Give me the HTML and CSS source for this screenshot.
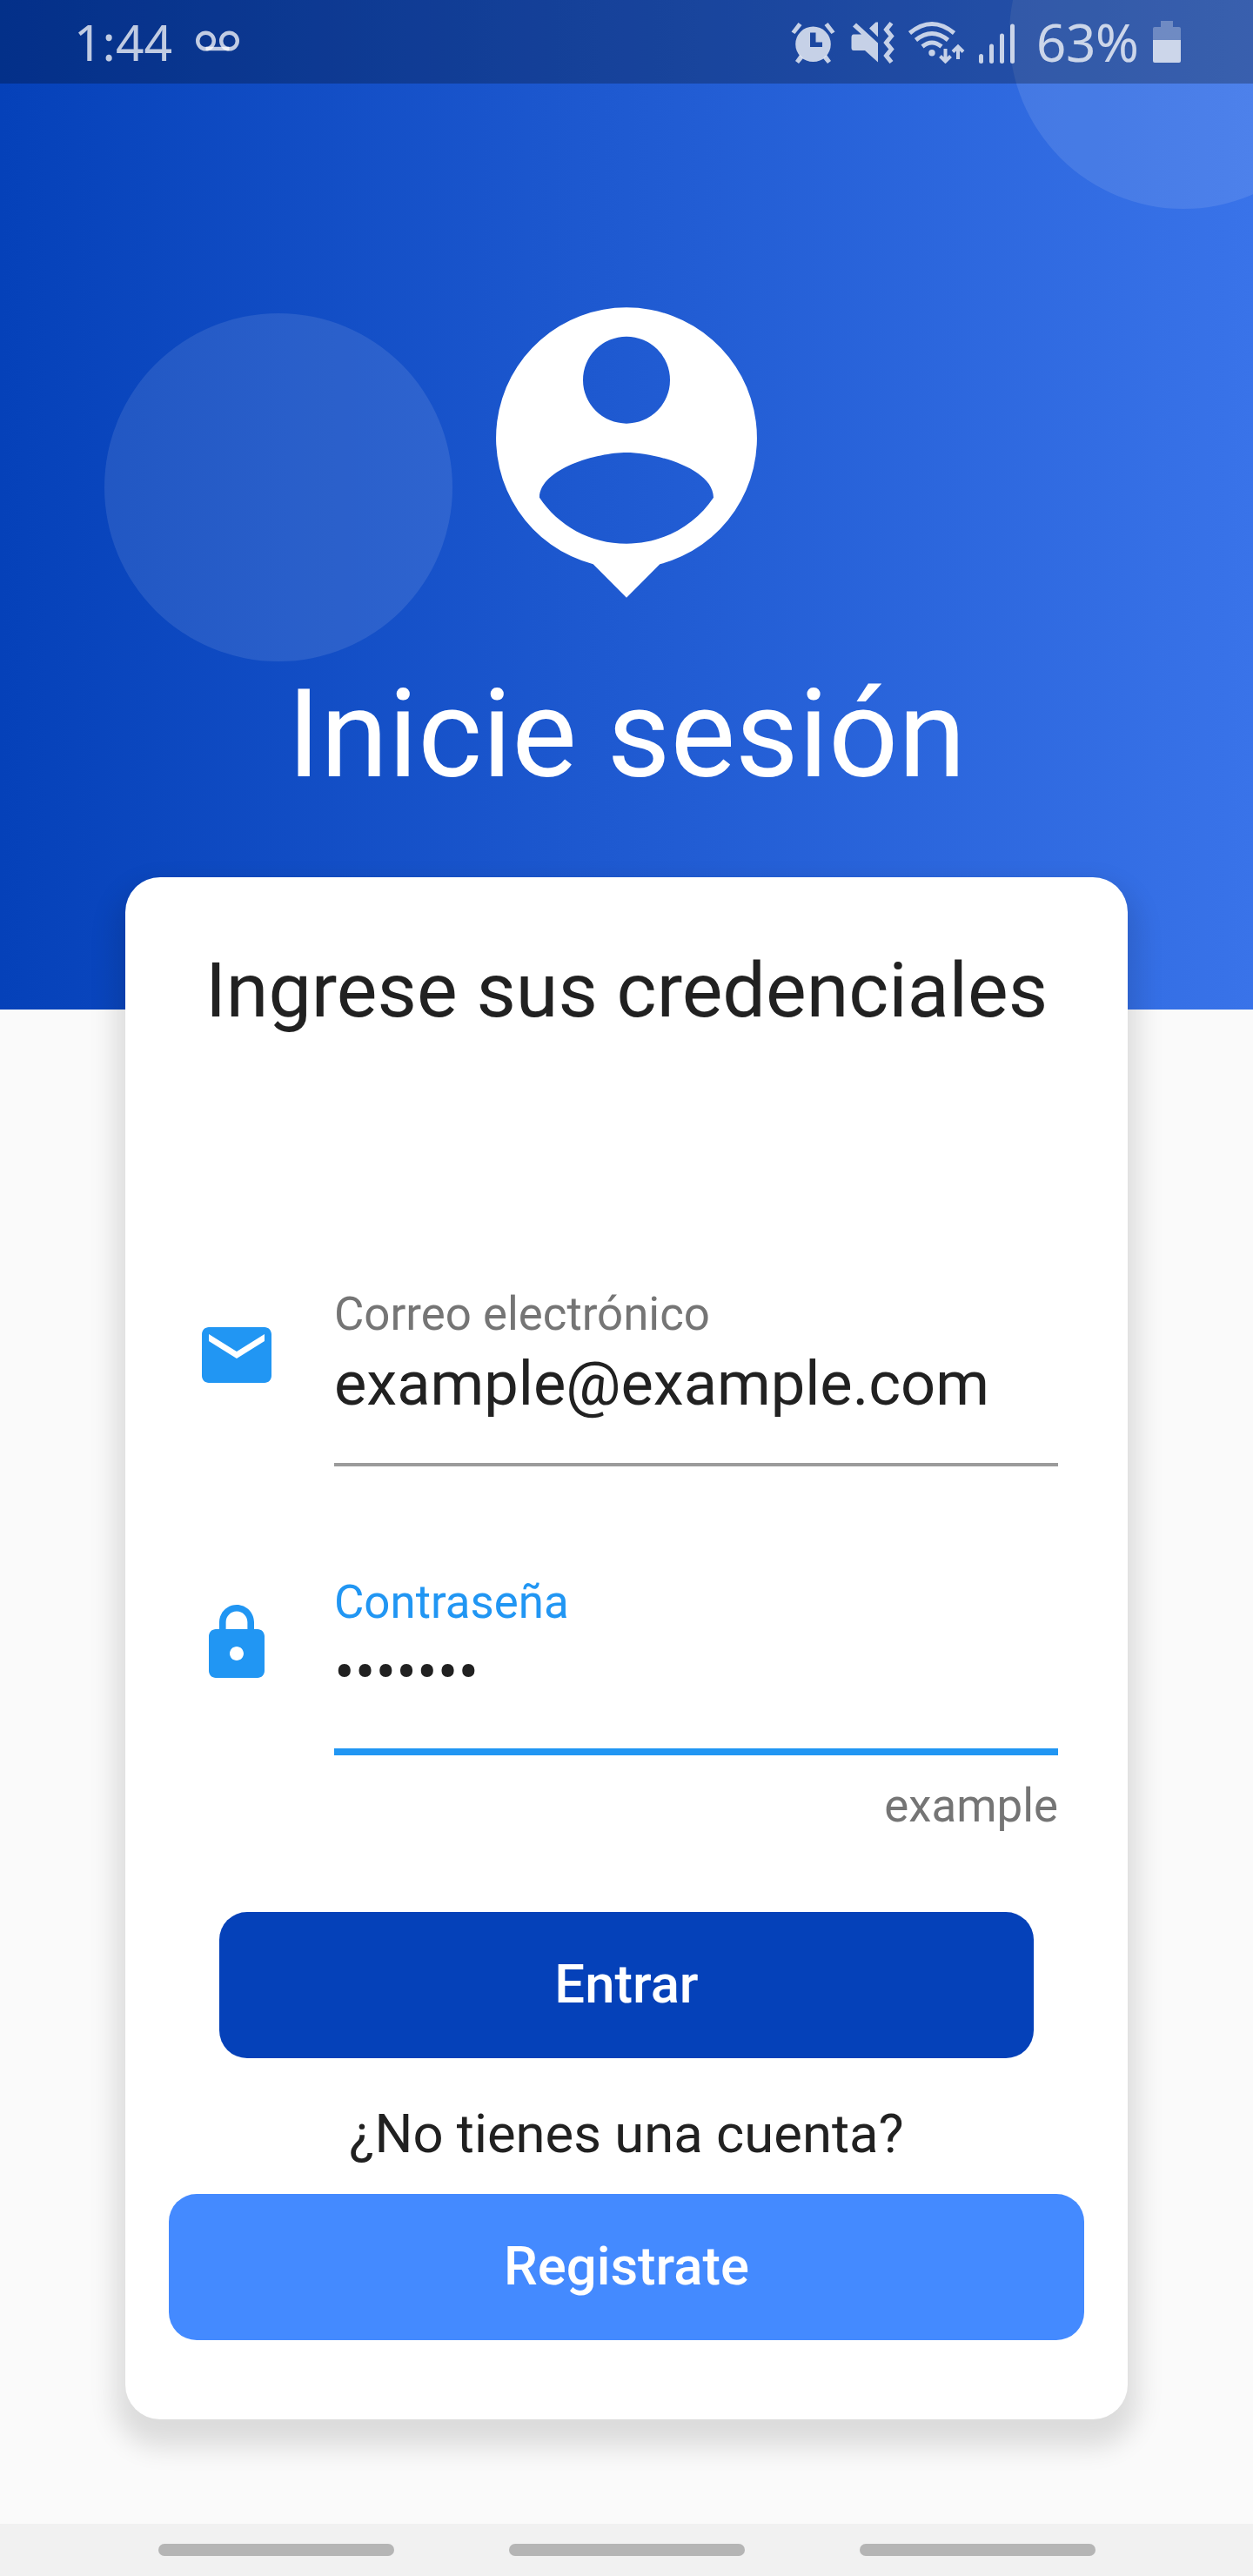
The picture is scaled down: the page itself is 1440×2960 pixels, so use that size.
FILE: index.html
```html
<!DOCTYPE html>
<html lang="es">
<head>
<meta charset="utf-8">
<title>Inicie sesión</title>
<link rel="stylesheet" href="styles.css">
</head>
<body>
<div class="screen">
  <header class="hero">
    <span class="bubble bubble-left"></span>
    <span class="bubble bubble-top"></span>
    <div class="status">
      <div class="status-group">
        <span class="clock">1:44</span>
        <svg class="voicemail" width="50" height="24" viewBox="0 0 50 24" fill="none" stroke="currentColor" stroke-width="4.4"><circle cx="11.5" cy="12" r="9.3"/><circle cx="38.5" cy="12" r="9.3"/><path d="M11.5 21H38.5"/></svg>
      </div>
      <svg class="tray" width="260" height="50" viewBox="905 22 260 50" fill="currentColor">
        <path d="M907.500 35.500l8-10.500 4 3-8 10zM957.500 35.500l-8-10.500-4 3 8 10z"/>
        <path fill-rule="evenodd" d="M932.500 29.500a20.300 20.300 0 1 0 0 40.600a20.300 20.300 0 0 0 0-40.600zM929 36.500h6.500V47.500h7.500v5.500H929z"/>
        <path d="M912 69l5-7 4 4-5 6zM953 69l-5-7-4 4 5 6z"/>
        <path d="M979 38.500h9l-10-9 4-4 25 23V70.500l-15-13.500h-13q-2.500 0-2.500-3v-12q0-3.500 2.500-3.500zM997 31.500l7.500-7h2.500v17z"/>
        <path d="M1022.500 25.500l-6 7.500 6 7.500-6 7.500 6 7.500-6 7.500 6 7.500" fill="none" stroke="currentColor" stroke-width="5"/>
        <g fill="none" stroke="currentColor" stroke-width="5"><path d="M1043.500 37q25.500-21 51 0M1050.500 45q18.500-15 37 0M1058 52.500q11-9 22 0"/></g>
        <circle cx="1069" cy="59.700" r="3.700"/>
        <path d="M1084.500 55v14M1078.500 63.500l6 6 6-6M1099 67V52M1093 58.500l6-6 6 6" fill="none" stroke="currentColor" stroke-width="4"/>
        <rect x="1123" y="61" width="5" height="11" rx="2.500"/><rect x="1135" y="49.500" width="5" height="22.500" rx="2.500"/><rect x="1147" y="37.500" width="5" height="34.500" rx="2.500"/><rect x="1159" y="26.500" width="5" height="45.500" rx="2.500"/>
      </svg>
      <span class="percent">63%</span>
      <svg class="battery" width="32" height="48" viewBox="0 0 32 48" fill="currentColor"><path opacity=".38" d="M9 0h14v7h7q2 0 2 2v13H0V9q0-2 2-2h7z"/><path d="M0 22h32v24q0 2-2 2H2q-2 0-2-2z"/></svg>
    </div>
    <svg class="avatar" width="400" height="400" viewBox="0 0 24 24"><path fill="#fff" fill-rule="evenodd" d="M12 2a9 9 0 0 0-2.300 17.700L12 22l2.300-2.300A9 9 0 0 0 12 2zM12 4a3 3 0 1 1 0 6a3 3 0 0 1 0-6zM12 18.280c-2.500 0-4.710-1.240-6-3.180C6.030 13.100 10 12 12 12s5.970 1.100 6 3.100c-1.290 1.940-3.500 3.180-6 3.180z"/></svg>
    <h1 class="title">Inicie sesión</h1>
  </header>
  <span class="bubble bubble-bottom"></span>
  <main class="card">
    <h2 class="card-title">Ingrese sus credenciales</h2>
    <div class="field field-mail">
      <svg class="icon" width="96" height="96" viewBox="0 0 24 24"><path fill="#2196f3" d="M20 4H4c-1.100 0-1.990.9-1.990 2L2 18c0 1.100.9 2 2 2h16c1.100 0 2-.9 2-2V6c0-1.100-.9-2-2-2zm0 4l-8 5-8-5V6l8 5 8-5v2z"/></svg>
      <div class="control">
        <span class="label">Correo electrónico</span>
        <span class="value">example@example.com</span>
      </div>
    </div>
    <div class="field field-pass">
      <svg class="icon" width="96" height="96" viewBox="0 0 24 24"><path fill="#2196f3" d="M18 8h-1V6c0-2.760-2.240-5-5-5S7 3.240 7 6v2H6c-1.100 0-2 .9-2 2v10c0 1.100.9 2 2 2h12c1.100 0 2-.9 2-2V10c0-1.100-.9-2-2-2zm-6 9c-1.100 0-2-.9-2-2s.9-2 2-2 2 .9 2 2-.9 2-2 2zm3.100-9H8.900V6c0-1.710 1.390-3.100 3.100-3.100 1.710 0 3.100 1.390 3.100 3.100v2z"/></svg>
      <div class="control focused">
        <span class="label">Contraseña</span>
        <span class="value">•••••••</span>
      </div>
    </div>
    <span class="counter">example</span>
    <button class="btn btn-login">Entrar</button>
    <p class="question">¿No tienes una cuenta?</p>
    <button class="btn btn-register">Registrate</button>
  </main>
  <nav class="navbar"><span class="pill"></span><span class="pill"></span><span class="pill"></span></nav>
</div>
</body>
</html>
```
FILE: styles.css
```css
* { box-sizing: border-box; }
body { margin: 0; font-family: Roboto, sans-serif; background: #fafafa; }
.screen {
  position: relative;
  display: flex;
  flex-direction: column;
  align-items: center;
  width: 1440px;
  height: 2960px;
  overflow: hidden;
  color: #212121;
}
.hero {
  position: relative;
  display: flex;
  flex-direction: column;
  align-items: center;
  flex: none;
  width: 100%;
  height: 1160px;
  overflow: hidden;
  background: linear-gradient(90deg, #0541b9, #3973e9);
}
.bubble {
  position: absolute;
  width: 400px;
  height: 400px;
  border-radius: 50%;
  background: rgba(255, 255, 255, .1);
}
.bubble-left { left: 120px; top: 360px; }
.bubble-top { left: 1160px; top: -160px; }
.bubble-bottom { left: 1080px; top: 2680px; }
.status {
  position: relative;
  display: flex;
  align-items: center;
  flex: none;
  width: 100%;
  height: 96px;
  padding: 0 83px 0 85px;
  background: rgba(0, 0, 0, .26);
  color: rgba(255, 255, 255, .75);
  font: 57px/96px "Noto Sans", sans-serif;
}
.status-group { display: flex; align-items: center; gap: 27px; flex: 1; }
.voicemail { margin-top: -3px; }
.tray { margin-right: 24px; }
.percent { width: 119px; margin-right: 15px; font-size: 60px; letter-spacing: -.3px; }
.avatar { position: relative; margin-top: 224px; flex: none; }
.title {
  position: relative;
  margin: 42px 0 0;
  font-size: 140.8px;
  line-height: 164px;
  font-weight: 400;
  color: #fff;
}
.card {
  position: relative;
  display: flex;
  flex-direction: column;
  flex: none;
  width: 1152px;
  height: 1772px;
  margin-top: -152px;
  padding-top: 78px;
  border-radius: 40px;
  background: #fff;
  box-shadow: 0 20px 30px 12px rgba(0, 0, 0, .12);
}
.card-title { margin: 0; text-align: center; font-size: 88px; line-height: 104px; font-weight: 400; }
.field { display: flex; padding: 0 80px; gap: 64px; }
.field-mail { height: 206px; margin-top: 289px; }
.field-pass { height: 207px; margin-top: 125px; }
.icon { flex: none; margin-top: 30px; }
.control {
  display: flex;
  flex-direction: column;
  width: 832px;
  height: 206px;
  border-bottom: 4px solid #9b9b9b;
}
.label { font-size: 52.8px; line-height: 64px; margin-top: -1px; color: #757575; }
.value { font-size: 70.4px; line-height: 84px; margin-top: 6px; }
.focused { height: 207px; border-bottom: 8px solid #2196f3; }
.focused .label { color: #2196f3; }
.counter { margin: 26px 80px 0 0; text-align: right; font-size: 52.8px; line-height: 64px; color: #757575; }
.btn {
  border: 0;
  padding: 0 0 2px;
  align-self: center;
  height: 168px;
  border-radius: 32px;
  font: 500 61.6px/166px Roboto, sans-serif;
  color: #fff;
}
.btn-login { width: 936px; margin-top: 90px; background: #0541b9; }
.question { margin: 52px 0 34px; text-align: center; font-size: 61.6px; line-height: 70px; }
.btn-register { width: 1052px; background: #448aff; }
.navbar {
  position: absolute;
  left: 0;
  bottom: 0;
  display: flex;
  align-items: center;
  justify-content: center;
  gap: 132px;
  width: 100%;
  height: 60px;
  background: #f1f1f1;
}
.pill { width: 271px; height: 14px; border-radius: 7px; background: #b5b5b5; }
```
